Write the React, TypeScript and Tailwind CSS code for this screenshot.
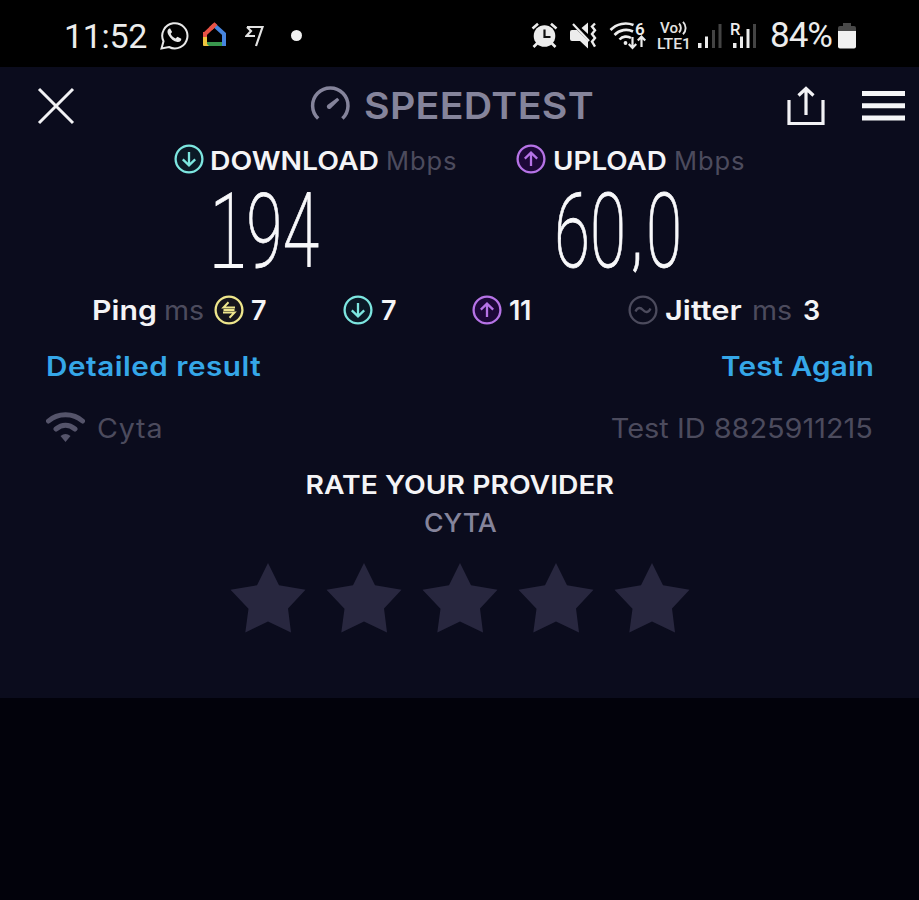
import type { ReactNode } from "react";

function CircleIcon({ color, glow, children }: { color: string; glow: string; children: ReactNode }) {
  return (
    <svg width="30" height="30" viewBox="0 0 30 30" fill="none" stroke={color} strokeWidth="2.3" className="shrink-0">
      <circle cx="15" cy="15" r="13.4" fill={glow} />
      {children}
    </svg>
  );
}

function DownIcon() {
  return (
    <CircleIcon color="#7de6e0" glow="#0b1926">
      <path d="M15 8v13.2M8.8 15.3l6.2 6 6.2-6" />
    </CircleIcon>
  );
}

function UpIcon() {
  return (
    <CircleIcon color="#b673e6" glow="#1d0838">
      <path d="M15 22V8.8M8.8 14.7l6.2-6 6.2 6" />
    </CircleIcon>
  );
}

function PingIcon() {
  return (
    <CircleIcon color="#eee68c" glow="#16151c">
      <path d="M14.500 7.300L9.500 12.500H21M9 17.500h11.500l-5 5.200M9.500 15h11" strokeWidth="2" />
    </CircleIcon>
  );
}

function JitterIcon() {
  return (
    <CircleIcon color="#4c4b5d" glow="none">
      <path d="M7.5 16.5c2-4.5 5-4.3 7.5-1.5s5.5 3 7.5-1.5" />
    </CircleIcon>
  );
}

function StatusBar() {
  return (
    <header className="flex h-[67px] items-center bg-black pt-[4px] font-['Roboto',sans-serif] text-[#ececec]">
      <span className="ml-[64px] w-[84px] whitespace-nowrap text-[34px] leading-none tracking-[-0.3px]">11:52</span>
      <svg className="ml-[12px] shrink-0" width="29" height="29" viewBox="0 0 29 29" fill="none" stroke="#e8e8e8" strokeWidth="2">
        <path d="M1.5 27.5l2-7.2A12.6 12.6 0 1 1 9 26z" />
        <path d="M10 7.2c-2.7.9-3.2 3.7-1.5 6.7 2 3.6 5.2 6.4 8.9 7 2.5.3 4.1-1.3 3.9-3.2l-3.8-2-2 1.8c-2.4-1-4-2.7-4.8-4.7l1.4-1.9z" fill="#e8e8e8" stroke="none" />
      </svg>
      <svg className="mb-[2px] ml-[13px] shrink-0" width="25" height="25" viewBox="0 0 25 25" fill="none" strokeWidth="4">
        <path d="M3 12L12.5 3" stroke="#e75245" />
        <path d="M3 10v9" stroke="#e75245" />
        <path d="M3 15v8" stroke="#efc53d" />
        <path d="M5 22h16" stroke="#39974d" />
        <path d="M12 3l10 9v12" stroke="#4685df" />
        <path d="M8.5 6.8L12.5 3l1.5 1.4" stroke="#e75245" />
        <path d="M1 24h6l-4-4z" fill="#efc53d" />
      </svg>
      <svg className="ml-[18px] shrink-0" width="20" height="22" viewBox="0 0 20 22" fill="none" stroke="#e2e2e2" strokeWidth="2.2">
        <path d="M2 2h15.5L11 21M2 2l4 4-4.5 5H10" />
      </svg>
      <span className="ml-[26px] size-[11px] rounded-full bg-[#f0f0f0]" />

      <svg className="ml-[229px] shrink-0" width="27" height="27" viewBox="0 0 27 27" fill="none" stroke="#ececec">
        <circle cx="13.5" cy="14" r="10.8" fill="#ececec" stroke="none" />
        <path d="M1.5 6.5L7 1.700M25.5 6.5L20 1.700" strokeWidth="2.6" />
        <path d="M6.5 21l-4 4M20.5 21l4 4" strokeWidth="2.6" />
        <path d="M13.5 7.5V15h6" stroke="#111" strokeWidth="2.2" />
      </svg>
      <svg className="ml-[12px] shrink-0" width="28" height="27" viewBox="0 0 28 27" fill="none">
        <path d="M0 10q0-2 2-2h5l11 11v7.500l-8-7.500H2q-2 0-2-2zM11.500 6L18 .5V12z" fill="#ececec" />
        <path d="M3 2l16 17" stroke="#ececec" strokeWidth="2.2" />
        <path d="M25 1.5l-3 3 3 3.8-3 3.8 3 3.8-3 3.8 3 5" stroke="#ececec" strokeWidth="2.4" />
      </svg>
      <svg className="ml-[11px] shrink-0" width="40" height="30" viewBox="0 0 40 30" fill="none" stroke="#ececec" strokeWidth="2.6">
        <path d="M1.5 9C7.5 2.500 17 1 24.500 4" />
        <path d="M5.5 14c5-5.3 12.500-6.5 18.500-3.500" />
        <path d="M10.500 18.500c3-3.300 8-3.800 11.500-1.500" />
        <circle cx="16.500" cy="22" r="1.900" fill="#ececec" stroke="none" />
        <path d="M23.500 16v11M19.800 23l3.700 4 3.700-4M32.500 26V15.500M28.800 19.500l3.700-4 3.700 4" strokeWidth="2.2" />
        <text x="26" y="14" fill="#ececec" stroke="none" fontFamily="Roboto" fontWeight="600" fontSize="17">6</text>
      </svg>
      <svg className="ml-[8px] shrink-0 overflow-visible" width="35" height="29" viewBox="0 0 35 29" fill="#e4e4e4">
        <text x="3" y="12" fontFamily="Roboto" fontWeight="500" fontSize="14.500" textLength="18" lengthAdjust="spacingAndGlyphs">Vo</text>
        <path d="M22 2.500c2.500 2.500 2.500 6.500 0 9M26 .8c3.500 3.500 3.500 9 0 12.400" fill="none" stroke="#e4e4e4" strokeWidth="1.900" />
        <text x="0" y="28" fontFamily="Roboto" fontWeight="500" fontSize="15.500" textLength="34" lengthAdjust="spacingAndGlyphs">LTE1</text>
      </svg>
      <svg className="ml-[5px] shrink-0" width="25" height="26" viewBox="0 0 25 26">
        <path d="M1 20h3.500v5H1zM8 13.500h3v11.500H8z" fill="#ececec" />
        <path d="M15 7h3v18h-3zM21.500 1h3v24h-3z" fill="#444" />
      </svg>
      <svg className="ml-[8px] shrink-0" width="28" height="30" viewBox="0 0 28 30">
        <text x="0" y="13.500" fill="#ececec" fontFamily="Roboto" fontWeight="500" fontSize="16.500">R</text>
        <path d="M3 22h3.500v5H3zM10 15.500h3v11.500h-3zM16.500 8h3v19h-3z" fill="#ececec" />
        <path d="M23 3h3v24h-3z" fill="#444" />
      </svg>
      <span className="ml-[12px] w-[62px] whitespace-nowrap text-[35px] leading-none tracking-[-1px]">84%</span>
      <svg className="ml-[6px] shrink-0" width="18" height="27" viewBox="0 0 18 27">
        <path d="M5 1h8v3h3q2 0 2 2v5H0V6q0-2 2-2h3z" fill="#484848" />
        <path d="M0 9h18v15.500q0 2-2 2H2q-2 0-2-2z" fill="#f0f0f0" />
      </svg>
    </header>
  );
}

function TitleBar() {
  return (
    <div className="flex h-[70px] items-center pt-[7px]">
      <svg className="ml-[37px] shrink-0" width="38" height="38" viewBox="0 0 38 38" stroke="#f2f2f5" strokeWidth="3" fill="none">
        <path d="M2 2l34 34M36 2L2 36" />
      </svg>
      <svg className="ml-[235px] mb-[3px] shrink-0" width="41" height="36" viewBox="0 0 41 36" stroke="#85849b" strokeWidth="3.500" fill="none">
        <path d="M8.200 32.500a17.700 17.700 0 1 1 24.200 0" />
        <path d="M27.300 11.800L29.300 14 20.700 22.500q-2 1.300-3.300-.2t0-3.200z" fill="#85849b" stroke="none" />
      </svg>
      <h1 className="ml-[13px] w-[232px] origin-left scale-x-[1.063] whitespace-nowrap text-[37px] font-semibold leading-none tracking-[0.3px] text-[#85849b]">SPEEDTEST</h1>
      <svg className="ml-[190px] shrink-0" width="40" height="40" viewBox="0 0 40 40" stroke="#f2f2f5" strokeWidth="3.200" fill="none">
        <path d="M3 14v23.500h34V14M20 29V3M12.500 9.500L20 2.500l7.500 7" />
      </svg>
      <svg className="ml-[35px] shrink-0" width="45" height="32" viewBox="0 0 45 32" fill="#f5f5f7">
        <path d="M1 1h43v5H1zM1 13.300h43v5H1zM1 25.500h43v5H1z" />
      </svg>
    </div>
  );
}

function Speeds() {
  return (
    <>
      <div className="flex h-[46px] items-center text-[25.500px] leading-none text-[#f4f4f6]">
        <span className="ml-[174px] mb-[2px]"><DownIcon /></span>
        <span className="ml-[6px] w-[176px] origin-left scale-x-[1.11] whitespace-nowrap pt-px font-semibold">DOWNLOAD</span>
        <span className="w-[130px] whitespace-nowrap pt-px tracking-[0.9px] text-[#4c4b5d]">Mbps</span>
        <span className="mb-[2px]"><UpIcon /></span>
        <span className="ml-[7px] w-[121px] origin-left scale-x-[1.09] whitespace-nowrap pt-px font-semibold">UPLOAD</span>
        <span className="whitespace-nowrap pt-px tracking-[0.9px] text-[#4c4b5d]">Mbps</span>
      </div>
      <div className="flex h-[100px] items-center pb-[3px] font-['Roboto',sans-serif] text-[104px] font-extralight leading-[78px] text-[#f8f8fa] [-webkit-text-stroke:0.8px_#f8f8fa]">
        <span className="relative ml-[210px] w-[344px] origin-left scale-x-[0.635] whitespace-nowrap">
          194
          <span className="absolute bottom-[3px] left-[7px] h-[4px] w-[45px] bg-[#f8f8fa]" />
        </span>
        <span className="flex origin-left scale-x-[0.63] whitespace-nowrap">
          60
          <span className="ml-[9px] mr-[6px] text-[86px] font-light">,</span>
          0
        </span>
      </div>
    </>
  );
}

function Latency() {
  return (
    <div className="flex h-[54px] items-center text-[27px] font-semibold leading-none text-[#f4f4f6]">
      <span className="ml-[92px] w-[72px] origin-left scale-x-[1.12] whitespace-nowrap">Ping</span>
      <span className="w-[50px] origin-left scale-x-[1.06] whitespace-nowrap font-normal text-[#4c4b5d]">ms</span>
      <PingIcon />
      <span className="ml-[7px] w-[92px]">7</span>
      <DownIcon />
      <span className="ml-[8px] w-[91px]">7</span>
      <UpIcon />
      <span className="ml-[7px] w-[119px] tracking-[-0.5px]">11</span>
      <JitterIcon />
      <span className="ml-[7px] w-[87px] origin-left scale-x-[1.14] whitespace-nowrap">Jitter</span>
      <span className="w-[51px] origin-left scale-x-[1.06] whitespace-nowrap font-normal text-[#4c4b5d]">ms</span>
      <span>3</span>
    </div>
  );
}

function Star() {
  return (
    <svg width="76" height="72" viewBox="0 0 76 72" fill="#28273f">
      <path d="M38 0L49 22.300 75.500 26.800 58 45.500 61 69.500 38 58.500 15.300 69.500 18.500 45.800.5 26.800 27 22.300z" />
    </svg>
  );
}

export default function App() {
  return (
    <div className="h-[900px] w-[919px] overflow-hidden bg-[#02020b] font-['Inter',sans-serif]">
      <StatusBar />
      <main className="h-[631px] bg-[#0b0c1d]">
        <TitleBar />
        <Speeds />
        <Latency />
        <div className="flex h-[58px] items-center justify-between pl-[46px] pr-[45px] text-[27px] font-semibold leading-none text-[#35a7e8]">
          <a className="origin-left scale-x-[1.1] tracking-[0.45px]">Detailed result</a>
          <a className="origin-right scale-x-[1.1] tracking-[0.1px]">Test Again</a>
        </div>
        <div className="flex h-[66px] items-center pl-[46px] pr-[46px] text-[27px] leading-none text-[#4c4b5d]">
          <svg className="mb-[3px]" width="39" height="31" viewBox="0 0 39 31" fill="none" stroke="#55546a" strokeWidth="5">
            <path d="M2.500 10C11.500 1.600 27.500 1.600 36.500 10M10 18c6-5 13-5 19 0" strokeLinecap="round" />
            <path d="M14.500 25q5-4 10 0L19.500 31z" fill="#55546a" stroke="none" />
          </svg>
          <span className="ml-[12px] grow origin-left scale-x-[1.06] tracking-[0.8px]">Cyta</span>
          <span className="origin-right scale-x-[1.07]">Test ID 8825911215</span>
        </div>
        <section className="flex flex-col items-center pt-[5px]">
          <h2 className="h-[38px] scale-x-[1.088] whitespace-nowrap text-[26px] font-semibold leading-[38px] text-[#f4f4f6]">RATE YOUR PROVIDER</h2>
          <p className="ml-[2px] h-[38px] scale-x-[1.03] text-[26px] font-medium leading-[38px] text-[#85849b]">CYTA</p>
          <div className="mt-[21px] flex gap-[20px]">
            <Star />
            <Star />
            <Star />
            <Star />
            <Star />
          </div>
        </section>
      </main>
    </div>
  );
}
